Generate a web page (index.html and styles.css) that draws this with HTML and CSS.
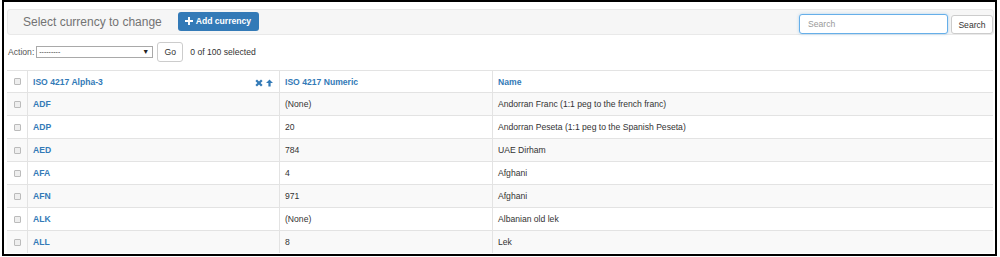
FILE: index.html
```html
<!DOCTYPE html>
<html lang="en">
<head>
<meta charset="UTF-8">
<title>Select currency to change</title>
<link rel="stylesheet" href="styles.css">
</head>
<body>
<div class="frame">
  <div class="page-header">
    <h2 class="title">Select currency to change</h2>
    <a class="btn-add" href="#">
      <svg class="plus" viewBox="0 0 10 10" width="8" height="8"><path d="M3.8 0h2.4v3.8H10v2.4H6.2V10H3.8V6.2H0V3.8h3.8z" fill="#fff"/></svg>
      Add currency
    </a>
    <form class="search">
      <input type="text" class="search-input" placeholder="Search">
      <button type="button" class="btn-default search-btn">Search</button>
    </form>
  </div>

  <div class="actions">
    <label class="action-label">Action:</label>
    <span class="select-wrap">
      <select class="action-select">
        <option>---------</option>
      </select>
      <span class="caret">&#9660;</span>
    </span>
    <button type="button" class="btn-default go-btn">Go</button>
    <span class="counter">0 of 100 selected</span>
  </div>

  <table class="result-list">
    <colgroup>
      <col class="c-check">
      <col class="c-alpha">
      <col class="c-num">
      <col>
    </colgroup>
    <thead>
      <tr>
        <th class="check"><input type="checkbox"></th>
        <th>
          <div class="sorted">
            <a href="#">ISO 4217 Alpha-3</a>
            <span class="sort-icons">
              <svg viewBox="0 0 10 10" width="8" height="8"><path d="M0.5 2.5L2.5 0.5 5 3 7.5 0.5 9.5 2.5 7 5 9.5 7.5 7.5 9.5 5 7 2.5 9.5 0.5 7.5 3 5z" fill="#337ab7"/></svg>
              <svg viewBox="0 0 10 10" width="7" height="8"><path d="M5 0L10 5H6.6V10H3.4V5H0z" fill="#337ab7"/></svg>
            </span>
          </div>
        </th>
        <th><a href="#">ISO 4217 Numeric</a></th>
        <th><a href="#">Name</a></th>
      </tr>
    </thead>
    <tbody>
      <tr><td class="check"><input type="checkbox"></td><td><a class="code" href="#">ADF</a></td><td>(None)</td><td>Andorran Franc (1:1 peg to the french franc)</td></tr>
      <tr><td class="check"><input type="checkbox"></td><td><a class="code" href="#">ADP</a></td><td>20</td><td>Andorran Peseta (1:1 peg to the Spanish Peseta)</td></tr>
      <tr><td class="check"><input type="checkbox"></td><td><a class="code" href="#">AED</a></td><td>784</td><td>UAE Dirham</td></tr>
      <tr><td class="check"><input type="checkbox"></td><td><a class="code" href="#">AFA</a></td><td>4</td><td>Afghani</td></tr>
      <tr><td class="check"><input type="checkbox"></td><td><a class="code" href="#">AFN</a></td><td>971</td><td>Afghani</td></tr>
      <tr><td class="check"><input type="checkbox"></td><td><a class="code" href="#">ALK</a></td><td>(None)</td><td>Albanian old lek</td></tr>
      <tr><td class="check"><input type="checkbox"></td><td><a class="code" href="#">ALL</a></td><td>8</td><td>Lek</td></tr>
    </tbody>
  </table>
</div>
</body>
</html>
```

FILE: styles.css
```css
body {
  margin: 0;
  padding: 0;
  background-color: #fff;
  font-family: 'Liberation Sans', Arial, Helvetica, sans-serif;
  font-size: 8.6px;
  color: #333;
}
a {
  color: #337ab7;
  text-decoration: none;
}
.frame {
  margin-left: 2px;
  width: 995px;
  height: 256px;
  box-sizing: border-box;
  border: 2px solid #000;
  overflow: hidden;
}
.page-header {
  display: flex;
  align-items: center;
  height: 26px;
  box-sizing: border-box;
  margin: 7px 1px 0 3px;
  padding-left: 15px;
  background-color: #f6f6f6;
  border: 1px solid #e9e9e9;
  border-radius: 3px;
}
.title {
  margin: 0;
  font-size: 12px;
  font-weight: normal;
  color: #737373;
}
.btn-add {
  display: flex;
  align-items: center;
  height: 19px;
  box-sizing: border-box;
  margin: 0 0 2px 16px;
  padding: 0 8px 0 7px;
  background-color: #337ab7;
  border-radius: 3px;
  color: #fff;
  font-weight: bold;
}
.btn-add .plus {
  margin-right: 3px;
}
.search {
  display: flex;
  align-self: flex-end;
  margin: 0 0 0 auto;
}
.search-input {
  width: 149px;
  height: 20px;
  box-sizing: border-box;
  margin: 0 3px 0 0;
  padding: 0 8px;
  border: 1px solid #66afe9;
  border-radius: 3px;
  box-shadow: 0 0 3px rgba(102, 175, 233, 0.5);
  font-family: inherit;
  font-size: 8.6px;
  outline: none;
}
.search-input::placeholder {
  color: #999;
}
.btn-default {
  box-sizing: border-box;
  padding: 0;
  background-color: #fff;
  border: 1px solid #ccc;
  border-radius: 3px;
  color: #333;
  font-family: inherit;
  font-size: 8.6px;
}
.search-btn {
  width: 42px;
  height: 19px;
  margin-top: 1px;
}
.actions {
  display: flex;
  align-items: center;
  height: 20px;
  margin-top: 7px;
  padding-left: 4px;
}
.action-label {
  color: #555;
}
.select-wrap {
  position: relative;
  margin-left: 2px;
}
.action-select {
  display: block;
  width: 117px;
  height: 12px;
  box-sizing: border-box;
  padding: 0 2px;
  border: 1px solid #a9a9a9;
  border-radius: 0;
  background-color: #fff;
  font-family: inherit;
  font-size: 7px;
  line-height: 10px;
  color: #333;
  appearance: none;
  -webkit-appearance: none;
}
.caret {
  position: absolute;
  top: 1px;
  right: 4px;
  font-size: 7px;
  line-height: 10px;
  color: #222;
}
.go-btn {
  width: 26px;
  height: 20px;
  margin-left: 4px;
}
.counter {
  margin-left: 7px;
}
.result-list {
  width: 986px;
  margin: 8px 0 0 3px;
  border-collapse: separate;
  border-spacing: 0;
  table-layout: fixed;
}
.c-check { width: 20px; }
.c-alpha { width: 252px; }
.c-num { width: 213px; }
.result-list th,
.result-list td {
  height: 22px;
  padding: 0 5px;
  border-top: 1px solid #e3e3e3;
  border-left: 1px solid #e3e3e3;
  text-align: left;
  vertical-align: middle;
  line-height: 22px;
  white-space: nowrap;
}
.result-list th:first-child,
.result-list td:first-child {
  border-left: none;
}
.result-list th {
  height: 19px;
  padding-top: 2px;
  line-height: 19px;
  font-weight: bold;
  background-color: #fff;
}
.result-list td.check,
.result-list th.check {
  padding: 0;
  text-align: center;
}
.result-list tbody tr:nth-child(odd) td {
  background-color: #f9f9f9;
}
.code {
  font-weight: bold;
}
.sorted {
  display: flex;
  align-items: center;
  justify-content: space-between;
  padding-right: 1px;
}
.sort-icons {
  display: flex;
  align-items: center;
  gap: 3px;
}
.sort-icons svg {
  display: block;
}
input[type="checkbox"] {
  appearance: none;
  -webkit-appearance: none;
  display: block;
  width: 7px;
  height: 7px;
  margin: 0 auto;
  box-sizing: border-box;
  border: 1px solid #bbb;
  border-radius: 1px;
  background-color: #eee;
}
```
